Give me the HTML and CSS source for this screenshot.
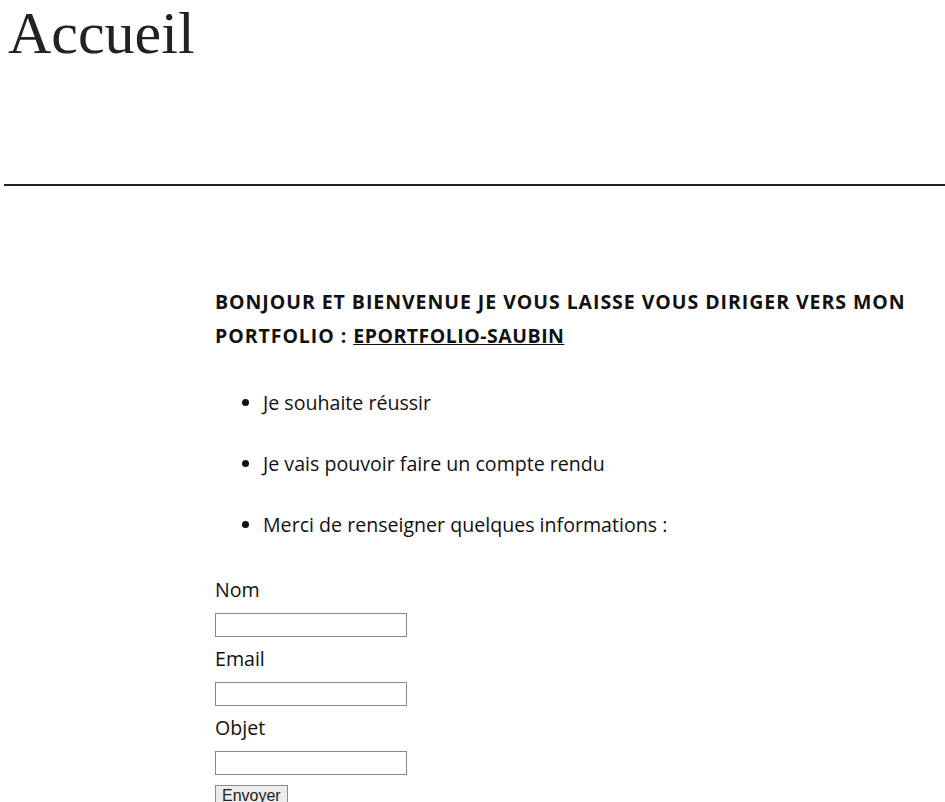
FILE: index.html
```html
<!DOCTYPE html>
<html lang="fr">
<head>
<meta charset="utf-8">
<title>Accueil</title>
<link rel="stylesheet" href="styles.css">
</head>
<body>
<header class="site-header">
  <h1 class="site-title">Accueil</h1>
</header>
<div class="rule"></div>
<main class="content">
  <h2 class="intro">BONJOUR ET BIENVENUE JE VOUS LAISSE VOUS DIRIGER VERS MON PORTFOLIO : <a class="intro-link" href="#">EPORTFOLIO-SAUBIN</a></h2>
  <ul class="points">
    <li>Je souhaite réussir</li>
    <li>Je vais pouvoir faire un compte rendu</li>
    <li>Merci de renseigner quelques informations :</li>
  </ul>
  <form class="contact">
    <label class="field-label" for="nom">Nom</label>
    <input class="field" id="nom" type="text">
    <label class="field-label" for="email">Email</label>
    <input class="field" id="email" type="text">
    <label class="field-label" for="objet">Objet</label>
    <input class="field" id="objet" type="text">
    <button class="submit" type="button">Envoyer</button>
  </form>
</main>
</body>
</html>
```

FILE: styles.css
```css
html, body {
  margin: 0;
  padding: 0;
  background: #fff;
  color: #000;
}

.site-header {
  padding: 0 0 0 8px;
  height: 184px;
}

.site-title {
  margin: 0;
  font-family: "Liberation Serif", "DejaVu Serif", serif;
  font-weight: normal;
  font-size: 60px;
  line-height: 66px;
  color: #222;
}

.rule {
  margin-left: 4px;
  border-top: 2px solid #222;
}

.content {
  padding: 99px 0 0 215px;
  font-family: "Open Sans", Lato, sans-serif;
  color: #111;
}

.intro {
  margin: 0;
  width: 715px;
  font-size: 19.5px;
  font-weight: bold;
  letter-spacing: 0.95px;
  line-height: 34px;
}

.intro-link {
  color: #111;
  text-decoration: underline;
  letter-spacing: 0.5px;
}

.points {
  margin: 38px 0 0 0;
  padding-left: 48px;
  font-size: 19.6px;
  line-height: 24px;
}

.points li {
  margin-bottom: 37px;
}

.contact {
  display: flex;
  flex-direction: column;
  align-items: flex-start;
  padding-top: 2px;
  font-size: 19.6px;
}

.field-label {
  line-height: 28px;
  margin-bottom: 9px;
}

.field {
  box-sizing: border-box;
  width: 192px;
  height: 24px;
  margin: 0 0 8px 0;
  border: 1px solid #888;
  padding: 0;
}

.submit {
  margin-top: 2px;
  font-family: "Liberation Sans", Arial, sans-serif;
  font-size: 16px;
  padding: 1px 6px;
  background: #ececec;
  border: 1px solid #8a8a8a;
  border-radius: 0;
  color: #222;
}
```
